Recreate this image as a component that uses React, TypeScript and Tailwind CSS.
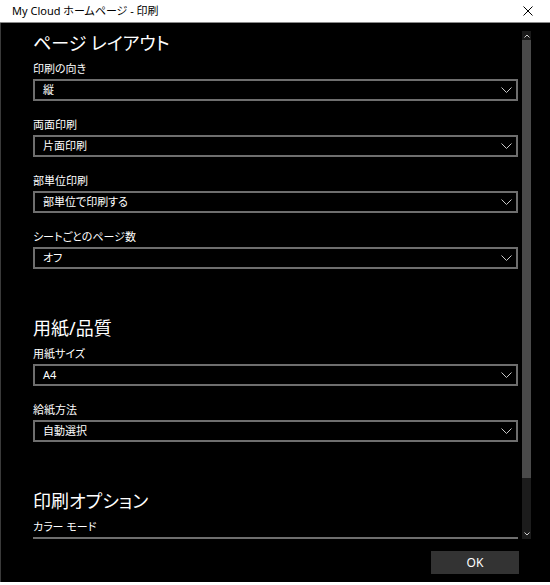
import { ReactNode } from "react";

type Field = { label: string; value: string };

const layout: Field[] = [
  { label: "印刷の向き", value: "縦" },
  { label: "両面印刷", value: "片面印刷" },
  { label: "部単位印刷", value: "部単位で印刷する" },
  { label: "シートごとのページ数", value: "オフ" },
];

const paper: Field[] = [
  { label: "用紙サイズ", value: "A4" },
  { label: "給紙方法", value: "自動選択" },
];

function Chevron() {
  return (
    <svg width="11" height="6" viewBox="0 0 11 6" fill="none" className="shrink-0">
      <path d="M0.5 0.5 L5.5 5.5 L10.5 0.5" stroke="#c8c8c8" strokeWidth="1" />
    </svg>
  );
}

function Select({ label, value, first }: Field & { first?: boolean }) {
  return (
    <div className={first ? "" : "mt-[16px]"}>
      <div className="text-[11px] leading-4 mb-[2px] text-white">{label}</div>
      <div className="h-[22px] border-2 border-[#6e6e6e] flex items-center justify-between pl-[8px] pr-[4px] text-[11px] text-white">
        <span>{value}</span>
        <Chevron />
      </div>
    </div>
  );
}

function Section({ title, children, first }: { title: string; children: ReactNode; first?: boolean }) {
  return (
    <div className={first ? "" : "mt-[47px]"}>
      <div className="text-[18px] leading-6 mb-[6px] text-white">{title}</div>
      {children}
    </div>
  );
}

export default function App() {
  return (
    <div
      className="w-[550px] h-[585px] flex flex-col bg-white [font-feature-settings:'palt']"
      style={{ fontFamily: "'Noto Sans', 'Noto Sans CJK JP', sans-serif" }}
    >
      {/* title bar */}
      <div className="h-[23px] shrink-0 flex items-center justify-between pl-[12px] pr-[12px] border-b border-[#8a8a8a]">
        <span className="text-[11px] text-black">My Cloud ホームページ - 印刷</span>
        <svg width="10" height="10" viewBox="0 0 10 10" className="mr-[5px]">
          <path d="M0.5 0.5 L9.5 9.5 M9.5 0.5 L0.5 9.5" stroke="#000" strokeWidth="1" />
        </svg>
      </div>

      <div className="h-[559px] shrink-0 bg-black flex flex-col border-l border-[#3a3a3a]">
        {/* scroll area */}
        <div className="h-[516px] flex">
          <div className="w-[517px] overflow-hidden pl-[32px] pt-[8px]">
            <Section title="ページ レイアウト" first>
              {layout.map((f, i) => (
                <Select key={f.label} {...f} first={i === 0} />
              ))}
            </Section>
            <Section title="用紙/品質">
              {paper.map((f, i) => (
                <Select key={f.label} {...f} first={i === 0} />
              ))}
            </Section>
            <Section title="印刷オプション">
              <Select label="カラー モード" value="" first />
            </Section>
          </div>

          {/* scrollbar */}
          <div className="ml-[4px] mt-[8px] w-[9px] flex flex-col">
            <div className="h-[9px] bg-[#1a1a1a] flex items-center justify-center">
              <svg width="6" height="4" viewBox="0 0 6 4">
                <path d="M0.5 3.5 L3 1 L5.5 3.5" stroke="#d0d0d0" strokeWidth="1" fill="none" />
              </svg>
            </div>
            <div className="h-[438px] bg-[#4a4a4a]" />
            <div className="flex-1 bg-[#1c1c1c]" />
            <div className="h-[10px] bg-[#1c1c1c] flex items-center justify-center">
              <svg width="6" height="4" viewBox="0 0 6 4">
                <path d="M0.5 0.5 L3 3 L5.5 0.5" stroke="#d0d0d0" strokeWidth="1" fill="none" />
              </svg>
            </div>
          </div>
        </div>

        {/* footer */}
        <div className="flex justify-end pr-[31px] pt-[12px]">
          <button className="w-[88px] h-[23px] bg-[#333333] text-white text-[12px] flex items-center justify-center">
            OK
          </button>
        </div>
      </div>
    </div>
  );
}
